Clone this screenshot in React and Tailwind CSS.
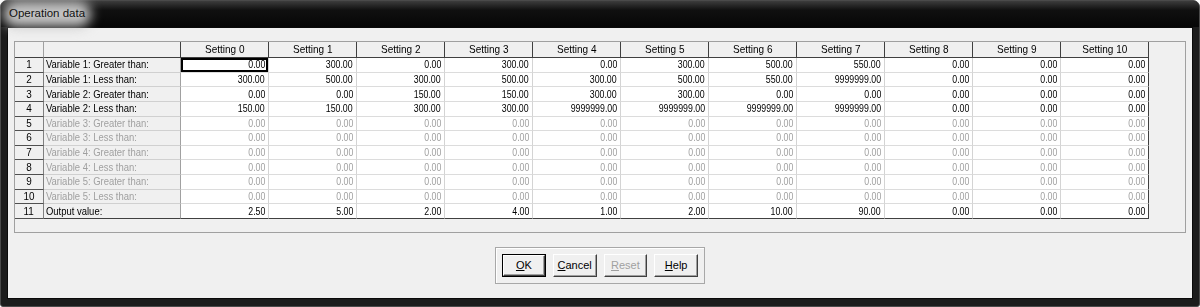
import React from 'react'

const settings = Array.from({ length: 11 }, (_, i) => `Setting ${i}`)

const z = Array(11).fill('0.00')
const rows = [
	{ label: 'Variable 1: Greater than:', values: ['0.00', '300.00', '0.00', '300.00', '0.00', '300.00', '500.00', '550.00', '0.00', '0.00', '0.00'] },
	{ label: 'Variable 1: Less than:', values: ['300.00', '500.00', '300.00', '500.00', '300.00', '500.00', '550.00', '9999999.00', '0.00', '0.00', '0.00'] },
	{ label: 'Variable 2: Greater than:', values: ['0.00', '0.00', '150.00', '150.00', '300.00', '300.00', '0.00', '0.00', '0.00', '0.00', '0.00'] },
	{ label: 'Variable 2: Less than:', values: ['150.00', '150.00', '300.00', '300.00', '9999999.00', '9999999.00', '9999999.00', '9999999.00', '0.00', '0.00', '0.00'] },
	{ label: 'Variable 3: Greater than:', values: z, disabled: true },
	{ label: 'Variable 3: Less than:', values: z, disabled: true },
	{ label: 'Variable 4: Greater than:', values: z, disabled: true },
	{ label: 'Variable 4: Less than:', values: z, disabled: true },
	{ label: 'Variable 5: Greater than:', values: z, disabled: true },
	{ label: 'Variable 5: Less than:', values: z, disabled: true },
	{ label: 'Output value:', values: ['2.50', '5.00', '2.00', '4.00', '1.00', '2.00', '10.00', '90.00', '0.00', '0.00', '0.00'] },
]

function Button({ label, isDefault, disabled }) {
	return (
		<div className={`h-[23px] w-[45px] ${isDefault ? 'border border-black' : ''}`}>
			<button
				className={`w-full h-full flex items-center justify-center bg-[#f0f0f0] border-t border-l border-t-white border-l-white border-r border-b border-r-[#404040] border-b-[#404040] shadow-[inset_-1px_-1px_0_#a0a0a0] text-[11px] ${disabled ? 'text-[#a0a0a0]' : 'text-black'}`}
			>
				<span>
					<span className="underline">{label[0]}</span>
					{label.slice(1)}
				</span>
			</button>
		</div>
	)
}

export default function App() {
	return (
		<div className="w-[1200px] h-[307px] bg-white font-['Liberation_Sans',Arial,sans-serif]">
			<div className="h-full flex flex-col rounded-t-[7px] rounded-b-[3px] border border-[#4a4a4a] bg-[#1c1c1c] px-[6px] pb-[7px]">
				{/* title bar */}
				<div className="h-[26px] flex items-center -mx-[6px] pl-[8px] rounded-t-[6px] bg-[linear-gradient(180deg,#3c3c3c_0%,#101010_35%,#060606_100%)]">
					<span className="relative text-[11.5px] text-[#111]">
						<span className="absolute -inset-x-[6px] -inset-y-[4px] rounded-full bg-[#c4c4c4] blur-[6px]" />
						<span className="relative">Operation data</span>
					</span>
				</div>

				{/* client area */}
				<div className="flex-1 flex flex-col bg-[#f0f0f0] border border-[#0a0a0a] pt-[13px] px-[6px]">
					<div className="h-[192px] border border-[#a0a0a0] bg-[#f0f0f0]">
						<div className="grid grid-cols-[29px_137px_repeat(11,88px)] grid-rows-[16px_repeat(11,minmax(0,1fr))] h-[177px] text-[11px] leading-none">
							<div className="bg-[#f0f0f0] border-r border-b border-r-[#a0a0a0] border-b-[#404040]" />
							<div className="bg-[#f0f0f0] border-r border-b border-[#404040]" />
							{settings.map((s) => (
								<div key={s} className="bg-[#f0f0f0] border-r border-b border-[#404040] flex items-center justify-center text-black">
									<span className="inline-block scale-x-[0.91]">{s}</span>
								</div>
							))}

							{rows.map((row, r) => {
								const last = r === rows.length - 1
								return (
									<React.Fragment key={r}>
										<div className="bg-[#f0f0f0] border-r border-b border-r-[#808080] border-b-[#505050] flex items-center justify-center text-black">
											<span className="inline-block scale-x-[0.9]">{r + 1}</span>
										</div>
										<div className={`bg-[#f0f0f0] border-r border-b border-r-[#a0a0a0] ${last ? 'border-b-[#404040]' : 'border-b-[#d0d0d0]'} flex items-center pl-[2px] ${row.disabled ? 'text-[#a0a0a0]' : 'text-black'}`}>
											<span className="inline-block origin-left scale-x-[0.86] whitespace-nowrap">{row.label}</span>
										</div>
										{row.values.map((v, c) => (
											<div
												key={c}
												className={`bg-white border-r border-b ${c === 10 ? 'border-r-[#404040]' : 'border-r-[#d4d4d4]'} ${last ? 'border-b-[#404040]' : 'border-b-[#dcdcdc]'} flex items-center justify-end pr-[3px] ${row.disabled ? 'text-[#a0a0a0]' : 'text-black'} ${r === 0 && c === 0 ? 'shadow-[inset_0_0_0_2px_#000]' : ''}`}
											>
												<span className="inline-block origin-right scale-x-[0.8]">{v}</span>
											</div>
										))}
									</React.Fragment>
								)
							})}
						</div>
					</div>

					{/* buttons */}
					<div className="mt-[14px] mx-auto w-[210px] h-[37px] border border-[#a8a8a8] shadow-[inset_1px_1px_0_#fff] flex items-center gap-[7px] px-[6px]">
						<Button label="OK" isDefault />
						<Button label="Cancel" />
						<Button label="Reset" disabled />
						<Button label="Help" />
					</div>
				</div>
			</div>
		</div>
	)
}
